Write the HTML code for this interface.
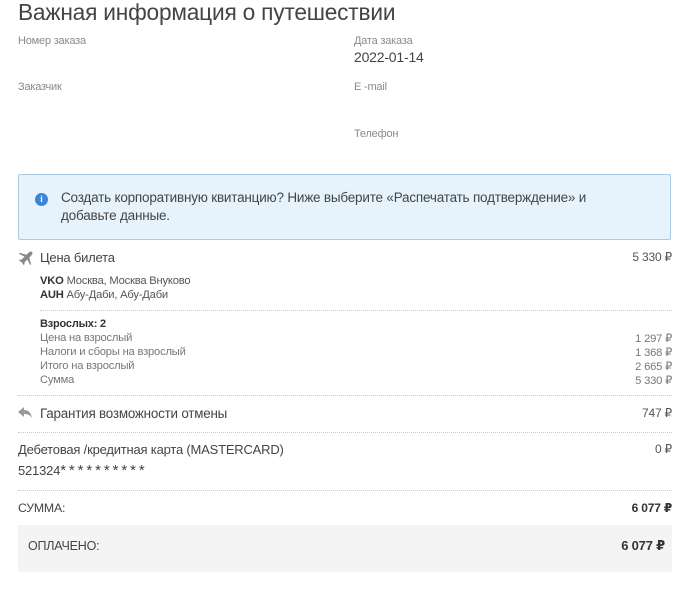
<!DOCTYPE html>
<html><head><meta charset="utf-8"><style>
body{margin:0;width:685px;height:600px;background:#fff;font-family:"Liberation Sans","DejaVu Sans",sans-serif;color:#333;position:relative;overflow:hidden}
.a{position:absolute;white-space:nowrap;letter-spacing:-0.2px}
.r{text-align:right;right:13px}
.lbl{font-size:11px;color:#8a8a8a}
.dot{position:absolute;height:0;border-top:1px dotted #c8c8c8;right:13px}
.s{font-size:11.2px;color:#777}
</style></head><body>
<div class="a" style="left:18px;top:-1px;font-size:22.7px;color:#444">Важная информация о путешествии</div>
<div class="a lbl" style="left:18px;top:35px">Номер заказа</div>
<div class="a lbl" style="left:354px;top:35px">Дата заказа</div>
<div class="a" style="left:354px;top:49px;font-size:14px;color:#444">2022-01-14</div>
<div class="a lbl" style="left:18px;top:81px">Заказчик</div>
<div class="a lbl" style="left:354px;top:81px">E -mail</div>
<div class="a lbl" style="left:354px;top:128px">Телефон</div>
<div style="position:absolute;left:18px;top:174px;width:653px;height:66px;background:#e6f3fc;border:1px solid #a9cbe6;box-sizing:border-box;border-radius:2px"></div>
<div style="position:absolute;left:35px;top:193px;width:13px;height:13px;border-radius:50%;background:#3b86d4;color:#fff;font-size:9px;font-weight:bold;text-align:center;line-height:13px">i</div>
<div class="a" style="left:61px;top:190px;font-size:13.5px;color:#444">Создать корпоративную квитанцию? Ниже выберите «Распечатать подтверждение» и</div>
<div class="a" style="left:61px;top:208px;font-size:13.5px;color:#444">добавьте данные.</div>
<svg style="position:absolute;left:18px;top:251px" width="15" height="15" viewBox="0 0 16 16"><path d="M15 1 C14 0 12 1 11 2 L9 4 2 2 1 3 7 6 4 9 2 9 1 10 4 12 6 15 7 14 7 12 10 9 13 15 14 14 12 7 14 5 C15 4 16 2 15 1Z" fill="#888"/></svg>
<div class="a" style="left:40px;top:250px;font-size:13px;color:#444">Цена билета</div>
<div class="a r" style="top:250px;font-size:12px;color:#555">5 330 ₽</div>
<div class="a" style="left:40px;top:275px;font-size:11.2px;color:#555"><b style="color:#333">VKO</b> Москва, Москва Внуково</div>
<div class="a" style="left:40px;top:289px;font-size:11.2px;color:#555"><b style="color:#333">AUH</b> Абу-Даби, Абу-Даби</div>
<div class="dot" style="left:40px;top:310px"></div>
<div class="a" style="left:40px;top:318px;font-size:11px;font-weight:bold;color:#333">Взрослых: 2</div>
<div class="a s" style="left:40px;top:332px">Цена на взрослый</div><div class="a s r" style="top:332px">1 297 ₽</div>
<div class="a s" style="left:40px;top:346px">Налоги и сборы на взрослый</div><div class="a s r" style="top:346px">1 368 ₽</div>
<div class="a s" style="left:40px;top:360px">Итого на взрослый</div><div class="a s r" style="top:360px">2 665 ₽</div>
<div class="a s" style="left:40px;top:374px">Сумма</div><div class="a s r" style="top:374px">5 330 ₽</div>
<div class="dot" style="left:18px;top:395px"></div>
<svg style="position:absolute;left:18px;top:407px" width="14" height="12" viewBox="0 0 14 12"><path d="M6 0 L0 5 6 10 6 7 C10 7 12 8 14 11 C13 6 11 3 6 3Z" fill="#999"/></svg>
<div class="a" style="left:40px;top:406px;font-size:13.4px;color:#444">Гарантия возможности отмены</div>
<div class="a r" style="top:406px;font-size:12px;color:#555">747 ₽</div>
<div class="dot" style="left:18px;top:432px"></div>
<div class="a" style="left:18px;top:442px;font-size:13px;color:#444">Дебетовая /кредитная карта (MASTERCARD)</div>
<div class="a r" style="top:442px;font-size:12px;color:#555">0 ₽</div>
<div class="a" style="left:18px;top:462px;font-size:13px;color:#444">521324<span style="font-size:15px;letter-spacing:2.9px">**********</span></div>
<div class="dot" style="left:18px;top:490px"></div>
<div class="a" style="left:18px;top:501px;font-size:12.3px;color:#444">СУММА:</div>
<div class="a r" style="top:501px;font-size:12px;font-weight:bold;color:#333">6 077 ₽</div>
<div style="position:absolute;left:18px;top:525px;width:654px;height:47px;background:#f4f4f4"></div>
<div class="a" style="left:28px;top:539px;font-size:12.5px;color:#444">ОПЛАЧЕНО:</div>
<div class="a" style="right:20px;top:538px;font-size:13px;font-weight:bold;color:#333">6 077 ₽</div>
</body></html>
